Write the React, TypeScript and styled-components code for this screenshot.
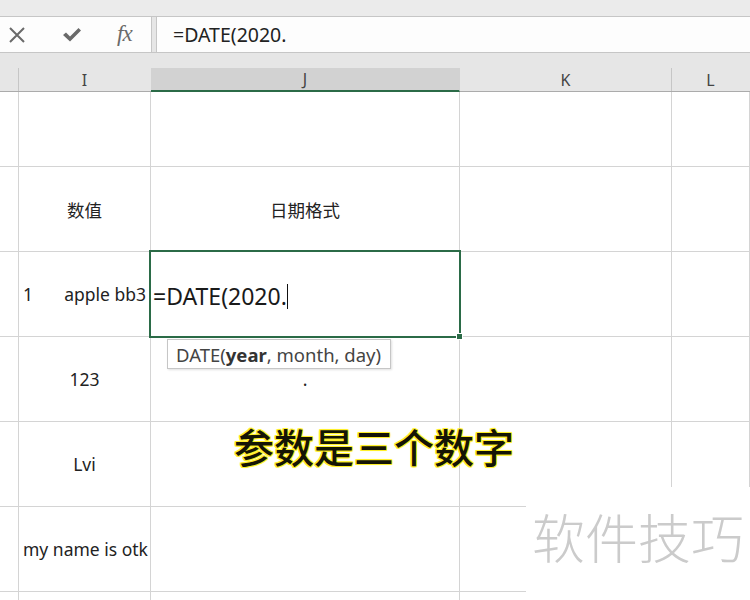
import React from 'react';
import styled, { createGlobalStyle } from 'styled-components';

const GlobalStyle = createGlobalStyle`
    html, body {
        margin: 0;
        padding: 0;
        background: #ffffff;
    }
    body {
        font-family: "Noto Sans", "Noto Sans CJK SC", sans-serif;
    }
`;

const GRID = '#d4d4d4';
const GREEN = '#2b6b47';
const COLS = '19px 132px 309px 212px 1fr';

const Page = styled.div`
    position: relative;
    width: 750px;
    height: 600px;
    overflow: hidden;
    background: #fff;
    display: flex;
    flex-direction: column;
    color: #222;

    & > * {
        flex-shrink: 0;
    }
`;

const TopStrip = styled.div`
    height: 16px;
    background: #ebebeb;
    border-bottom: 1px solid #c6c6c6;
`;

const FormulaBar = styled.div`
    height: 35px;
    display: flex;
    gap: 4px;
    background: #e6e6e6;
    border-bottom: 1px solid #c6c6c6;
`;

const IconBox = styled.div`
    width: 152px;
    background: #fdfdfd;
    border-right: 1px solid #c6c6c6;
    display: flex;
    align-items: center;
    box-sizing: border-box;
    padding-left: 8px;
`;

const IconSlot = styled.div<{ w: number }>`
    width: ${p => p.w}px;
    display: flex;
    align-items: center;
`;

const Fx = styled.span`
    font-family: "Liberation Serif", serif;
    font-style: italic;
    font-size: 23px;
    color: #6a6a6a;
    letter-spacing: -1px;
    line-height: 1;
    margin: -3px 0 0 1px;
`;

const FormulaInput = styled.div`
    flex: 1;
    background: #fdfdfd;
    border-left: 1px solid #c6c6c6;
    display: flex;
    align-items: center;
    padding-left: 16px;
    font-size: 19.5px;
    color: #222;
`;

const Gap = styled.div`
    height: 15px;
    background: #e6e6e6;
`;

const HeaderRow = styled.div`
    display: grid;
    grid-template-columns: ${COLS};
    height: 24px;
    background: #e6e6e6;
    border-bottom: 1px solid #ababab;
    box-sizing: border-box;
`;

const HeadCell = styled.div<{ selected?: boolean; edge?: boolean }>`
    display: flex;
    align-items: center;
    justify-content: center;
    font-size: 16px;
    color: #444;
    box-sizing: border-box;
    border-right: 1px solid ${p => (p.edge ? '#c6c6c6' : 'transparent')};
    background: ${p => (p.selected ? '#d2d2d2' : 'transparent')};
    border-bottom: ${p => (p.selected ? `2px solid ${GREEN}` : 'none')};
    margin-bottom: ${p => (p.selected ? '-1px' : '0')};
`;

const Sheet = styled.div`
    display: grid;
    grid-template-columns: ${COLS};
    grid-template-rows: 75px repeat(5, 85px) 20px;
`;

const Cell = styled.div<{ align?: 'left' | 'center' | 'split' }>`
    box-sizing: border-box;
    border-right: 1px solid ${GRID};
    border-bottom: 1px solid ${GRID};
    display: flex;
    align-items: center;
    justify-content: ${p =>
        p.align === 'left' ? 'flex-start' : p.align === 'split' ? 'space-between' : 'center'};
    padding: ${p => (p.align === 'center' ? '0' : '0 4px 0 4px')};
    font-size: 17.5px;
    color: #222;
    white-space: nowrap;
    overflow: visible;
`;

const EditText = styled.span`
    font-size: 23px;
    color: #1a1a1a;
    display: flex;
    align-items: center;
    margin-left: -2px;
    margin-top: 4px;
`;

const Caret = styled.span`
    display: inline-block;
    width: 1px;
    height: 25px;
    background: #111;
`;

const Selection = styled.div`
    position: absolute;
    left: 149px;
    top: 250px;
    width: 312px;
    height: 88px;
    box-sizing: border-box;
    border: 2px solid ${GREEN};
    pointer-events: none;
`;

const Handle = styled.div`
    position: absolute;
    right: -4px;
    bottom: -4px;
    width: 5px;
    height: 5px;
    background: ${GREEN};
    border: 1px solid #fff;
`;

const Tip = styled.div`
    position: absolute;
    left: 167px;
    top: 339px;
    width: 224px;
    height: 30px;
    box-sizing: border-box;
    background: #fff;
    border: 1px solid #c6c6c6;
    box-shadow: 1px 1px 2px rgba(0, 0, 0, 0.12);
    display: flex;
    align-items: center;
    padding-left: 8px;
    font-size: 18.5px;
    color: #444;

    b {
        font-weight: 700;
        color: #333;
    }
`;

const Caption = styled.div`
    position: absolute;
    left: 234px;
    top: 424px;
    font-family: "Noto Sans CJK SC", sans-serif;
    font-size: 40px;
    font-weight: 500;
    line-height: 1.1;
    color: #151505;
    text-shadow:
        1px 0 0 #fff02a, -1px 0 0 #fff02a, 0 1px 0 #fff02a, 0 -1px 0 #fff02a,
        1px 1px 0 #fff02a, -1px -1px 0 #fff02a, 1px -1px 0 #fff02a, -1px 1px 0 #fff02a,
        0 0 3px #fff68a;
`;

const Watermark = styled.div`
    position: absolute;
    left: 526px;
    top: 487px;
    width: 224px;
    height: 113px;
    background: #fff;
    box-sizing: border-box;
    padding: 20px 0 0 6px;
    font-family: "Noto Sans CJK SC", sans-serif;
    font-size: 53px;
    font-weight: 300;
    line-height: 1.1;
    color: #cbcbcb;
    white-space: nowrap;
`;

const CloseIcon = () => (
    <svg width="18" height="16" viewBox="0 0 18 16">
        <path d="M2 1 L16 15 M16 1 L2 15" stroke="#6a6a6a" strokeWidth="2" fill="none" />
    </svg>
);

const CheckIcon = () => (
    <svg width="20" height="16" viewBox="0 0 20 16">
        <path d="M1 8 L4 5.5 L8 9.5 L16.5 1 L19 3.5 L8 14.5 Z" fill="#6a6a6a" />
    </svg>
);

const rows: React.ReactNode[][] = [
    ['', '', '', '', ''],
    ['', '数值', '日期格式', '', ''],
    ['', 'split', 'edit', '', ''],
    ['', '123', '.', '', ''],
    ['', 'Lvi', '', '', ''],
    ['', 'my name is otk', '', '', ''],
    ['', '', '', '', ''],
];

export default function App() {
    return (
        <>
            <GlobalStyle />
            <Page>
                <TopStrip />
                <FormulaBar>
                    <IconBox>
                        <IconSlot w={54}><CloseIcon /></IconSlot>
                        <IconSlot w={54}><CheckIcon /></IconSlot>
                        <IconSlot w={30}><Fx>fx</Fx></IconSlot>
                    </IconBox>
                    <FormulaInput>=DATE(2020.</FormulaInput>
                </FormulaBar>
                <Gap />
                <HeaderRow>
                    <HeadCell edge />
                    <HeadCell>I</HeadCell>
                    <HeadCell selected>J</HeadCell>
                    <HeadCell edge>K</HeadCell>
                    <HeadCell>L</HeadCell>
                </HeaderRow>
                <Sheet>
                    {rows.map((row, r) =>
                        row.map((v, c) => {
                            if (v === 'split') {
                                return (
                                    <Cell key={`${r}-${c}`} align="split">
                                        <span>1</span>
                                        <span>apple bb3</span>
                                    </Cell>
                                );
                            }
                            if (v === 'edit') {
                                return (
                                    <Cell key={`${r}-${c}`} align="left">
                                        <EditText>
                                            =DATE(2020.<Caret />
                                        </EditText>
                                    </Cell>
                                );
                            }
                            const left = r === 5 && c === 1;
                            return (
                                <Cell key={`${r}-${c}`} align={left ? 'left' : 'center'}>
                                    {v}
                                </Cell>
                            );
                        })
                    )}
                </Sheet>
                <Selection>
                    <Handle />
                </Selection>
                <Tip>
                    DATE(<b>year</b>, month, day)
                </Tip>
                <Caption>参数是三个数字</Caption>
                <Watermark>软件技巧</Watermark>
            </Page>
        </>
    );
}
